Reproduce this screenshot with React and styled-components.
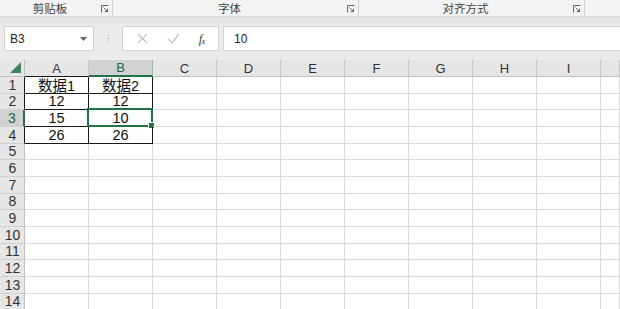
import React from "react";
import styled, { createGlobalStyle } from "styled-components";

const GlobalStyle = createGlobalStyle`
  html, body { margin: 0; padding: 0; }
  body {
    width: 620px;
    height: 309px;
    overflow: hidden;
    background: #e9e9e9;
    font-family: "Liberation Sans", "Noto Sans CJK SC", sans-serif;
  }
`;

const COLS = ["A", "B", "C", "D", "E", "F", "G", "H", "I", ""];
const ROW_H = 16.67;

const data = {
  1: ["数据1", "数据2"],
  2: ["12", "12"],
  3: ["15", "10"],
  4: ["26", "26"],
};

const Page = styled.div`
  width: 620px;
  height: 309px;
  overflow: hidden;
  display: flex;
  flex-direction: column;
  & > * {
    flex-shrink: 0;
  }
`;

const Ribbon = styled.div`
  height: 16px;
  display: flex;
  background: #f3f3f3;
  border-bottom: 1px solid #d8d8d8;
`;

const Group = styled.div`
  position: relative;
  width: ${(p) => p.w}px;
  flex: none;
  display: flex;
  align-items: center;
  justify-content: center;
  border-right: 1px solid #d2d2d2;
  font-family: "Noto Sans CJK SC", sans-serif;
  font-size: 11.5px;
  color: #444;
  line-height: 16px;
  box-sizing: border-box;
  padding-right: 12px;
`;

const Launcher = styled.svg`
  position: absolute;
  right: 3px;
  top: 5px;
`;

const Band = styled.div`
  height: 9px;
  background: linear-gradient(#e2e2e2, #ebebeb);
`;

const FormulaBar = styled.div`
  height: 25px;
  display: flex;
  align-items: stretch;
  padding-left: 4px;
  background: #ebebeb;
`;

const NameBox = styled.div`
  width: 90px;
  box-sizing: border-box;
  background: #fff;
  border: 1px solid #d4d4d4;
  display: flex;
  align-items: center;
  justify-content: space-between;
  padding: 0 6px 0 5px;
  font-size: 12px;
  color: #222;
`;

const Dots = styled.div`
  width: 28px;
  display: flex;
  flex-direction: column;
  align-items: center;
  justify-content: center;
  gap: 2px;
  span {
    width: 1px;
    height: 1px;
    background: #999;
  }
`;

const FxBox = styled.div`
  width: 97px;
  box-sizing: border-box;
  background: #fff;
  border: 1px solid #d4d4d4;
  display: flex;
  align-items: center;
  justify-content: space-around;
  padding: 0 4px;
`;

const FxLabel = styled.span`
  font-family: "Liberation Serif", serif;
  font-style: italic;
  font-size: 13px;
  color: #444;
  letter-spacing: -1px;
  sub {
    font-size: 9px;
    vertical-align: -1px;
  }
`;

const Input = styled.div`
  flex: 1;
  margin-left: 4px;
  background: #fff;
  border: 1px solid #d4d4d4;
  border-right: none;
  display: flex;
  align-items: center;
  padding-left: 10px;
  font-size: 12px;
  color: #222;
`;

const Gap = styled.div`
  height: 9px;
  background: #ebebeb;
`;

const Sheet = styled.div`
  display: grid;
  grid-template-columns: 25px repeat(9, 64px) 1fr;
  grid-template-rows: 17px repeat(14, ${ROW_H}px);
  background: #fff;
`;

const ColHead = styled.div`
  box-sizing: border-box;
  background: ${(p) => (p.sel ? "#d2d2d2" : "#e6e6e6")};
  border-right: 1px solid ${(p) => (p.sel ? "#9ab8a6" : "#c6c6c6")};
  border-bottom: ${(p) => (p.sel ? "2px solid #217346" : p.dark ? "1px solid #1a1a1a" : "1px solid #c0c0c0")};
  display: flex;
  align-items: center;
  justify-content: center;
  font-size: 13px;
  color: ${(p) => (p.sel ? "#1d6b3e" : "#333")};
`;

const Corner = styled.div`
  box-sizing: border-box;
  background: #e6e6e6;
  border-right: 1px solid #c0c0c0;
  border-bottom: 1px solid #c0c0c0;
  display: flex;
  align-items: flex-end;
  justify-content: flex-end;
  padding: 0 3px 3px 0;
`;

const RowHead = styled.div`
  box-sizing: border-box;
  background: ${(p) => (p.sel ? "#d2d2d2" : "#e6e6e6")};
  border-right: ${(p) => (p.sel ? "2px solid #217346" : p.dark ? "1px solid #1a1a1a" : "1px solid #c0c0c0")};
  border-bottom: 1px solid #d0d0d0;
  display: flex;
  align-items: center;
  justify-content: center;
  font-size: 14px;
  color: ${(p) => (p.sel ? "#1d6b3e" : "#333")};
  padding-left: 1px;
`;

const Cell = styled.div`
  position: relative;
  box-sizing: border-box;
  border-right: 1px solid ${(p) => (p.boxed ? "#1a1a1a" : "#dadada")};
  border-bottom: 1px solid ${(p) => (p.boxed ? "#1a1a1a" : "#dadada")};
  display: flex;
  align-items: center;
  justify-content: center;
  font-family: "Liberation Sans", "Noto Sans CJK SC", sans-serif;
  font-size: 14.5px;
  color: #111;
`;

const Selection = styled.div`
  position: absolute;
  left: -2px;
  top: -2px;
  right: -1px;
  bottom: -1px;
  border: 2px solid #217346;
  pointer-events: none;
`;

const Handle = styled.div`
  position: absolute;
  right: -4px;
  bottom: -4px;
  width: 5px;
  height: 5px;
  background: #217346;
  border: 1px solid #fff;
`;

const groups = [
  { label: "剪贴板", w: 113 },
  { label: "字体", w: 246 },
  { label: "对齐方式", w: 226 },
  { label: "", w: 60, noLaunch: true },
];

const LaunchIcon = () => (
  <Launcher width="8" height="8" viewBox="0 0 8 8">
    <path d="M0.5 7.5V0.5H7.5" fill="none" stroke="#666" />
    <path d="M2.5 2.5L6.5 6.5M6.5 3.5V6.5H3.5" fill="none" stroke="#666" />
  </Launcher>
);

export default function App() {
  const rows = Array.from({ length: 14 }, (_, i) => i + 1);
  return (
    <Page>
      <GlobalStyle />
      <Ribbon>
        {groups.map((g, i) => (
          <Group key={i} w={g.w}>
            {g.label}
            {!g.noLaunch && <LaunchIcon />}
          </Group>
        ))}
      </Ribbon>
      <Band />
      <FormulaBar>
        <NameBox>
          B3
          <svg width="7" height="4" viewBox="0 0 7 4">
            <path d="M0 0H7L3.5 4Z" fill="#666" />
          </svg>
        </NameBox>
        <Dots>
          <span />
          <span />
          <span />
        </Dots>
        <FxBox>
          <svg width="11" height="11" viewBox="0 0 11 11">
            <path d="M1 1L10 10M10 1L1 10" stroke="#c4c4c4" strokeWidth="1.2" />
          </svg>
          <svg width="13" height="11" viewBox="0 0 13 11">
            <path d="M1 6L5 10L12 1" fill="none" stroke="#c4c4c4" strokeWidth="1.4" />
          </svg>
          <FxLabel>
            f<sub>x</sub>
          </FxLabel>
        </FxBox>
        <Input>10</Input>
      </FormulaBar>
      <Gap />
      <Sheet>
        <Corner>
          <svg width="11" height="11" viewBox="0 0 11 11">
            <path d="M11 0V11H0Z" fill="#217346" opacity="0.85" />
          </svg>
        </Corner>
        {COLS.map((c) => (
          <ColHead key={c || "x"} sel={c === "B"} dark={c === "A"}>
            {c}
          </ColHead>
        ))}
        {rows.map((r) => (
          <React.Fragment key={r}>
            <RowHead sel={r === 3} dark={r <= 4}>
              {r}
            </RowHead>
            {COLS.map((c, ci) => {
              const boxed = r <= 4 && ci < 2;
              const text = data[r] && ci < 2 ? data[r][ci] : "";
              const selected = r === 3 && c === "B";
              return (
                <Cell key={c || "x"} boxed={boxed}>
                  {text}
                  {selected && (
                    <Selection>
                      <Handle />
                    </Selection>
                  )}
                </Cell>
              );
            })}
          </React.Fragment>
        ))}
      </Sheet>
    </Page>
  );
}
